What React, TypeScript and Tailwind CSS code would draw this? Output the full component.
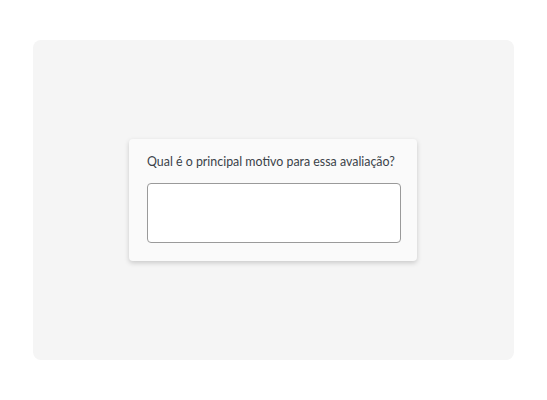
export default function App() {
  return (
    <div className="w-[547px] h-[400px] bg-white flex items-start justify-center pt-[40px]">
      <div className="w-[481px] h-[320px] rounded-[8px] bg-[#f5f5f5] flex items-center justify-start pl-[96px]">
        <div className="w-[288px] h-[122px] bg-[#fafafa] rounded-[4px] shadow-[0_2px_5px_rgba(0,0,0,0.18)] px-[18px] pt-[13px] flex flex-col">
          <div className="whitespace-nowrap text-[12.4px] leading-[20px] text-[#3b4249] font-['Lato',sans-serif]">
            Qual é o principal motivo para essa avaliação?
          </div>
          <textarea className="mt-[11px] w-[254px] h-[60px] rounded-[4px] border border-[#9a9a9a] bg-white resize-none outline-none" />
        </div>
      </div>
    </div>
  );
}
